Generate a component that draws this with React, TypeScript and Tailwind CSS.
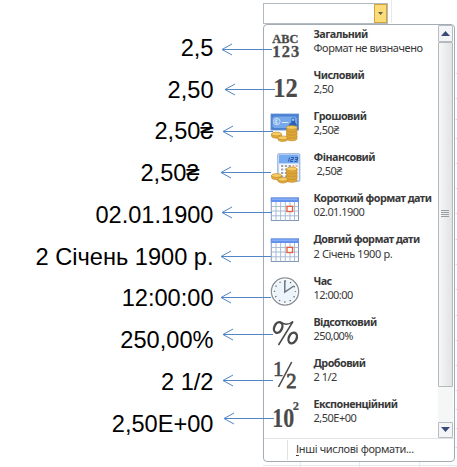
import React from "react";

const INK = "#4a4a4a";
const SERIF = "'Liberation Serif', serif";

function General() {
  return (
    <g fill={INK} stroke={INK} strokeWidth={0.3} fontFamily={SERIF} textAnchor="middle">
      <text x="15.3" y="12.5" fontSize="12.5" fontWeight={700} textLength="26" lengthAdjust="spacingAndGlyphs">ABC</text>
      <text x="15.8" y="27" fontSize="16.5" fontWeight={700} textLength="27" lengthAdjust="spacing">123</text>
    </g>
  );
}

function NumberIcon() {
  return (
    <text x="3.2" y="25.5" fill={INK} stroke={INK} strokeWidth={0.2} fontFamily={SERIF} fontWeight={700} fontSize="28" textLength="24.5" lengthAdjust="spacingAndGlyphs">12</text>
  );
}

function Coins({ y }: { y: number }) {
  return (
    <g transform={`translate(0 ${y})`} stroke="#b9862c" strokeWidth={0.6} fill="#f7cc62">
      {[11, 8, 5, 2].map((v) => (
        <g key={v}>
          <path d={`M16.5 ${v}v2.2c0 2.8 10.5 2.8 10.5 0v-2.2z`} fill="#e3a935" />
          <ellipse cx="21.75" cy={v} rx="5.25" ry="1.9" />
        </g>
      ))}
      <path d="M1.5 8.5v2c0 3 10 3 10 0v-2z" fill="#e3a935" />
      <ellipse cx="6.5" cy="8.5" rx="5" ry="1.9" />
      <path d="M8 12.3v1.5c0 3 9.6 3 9.6 0v-1.5z" fill="#e3a935" />
      <ellipse cx="12.8" cy="12.3" rx="4.8" ry="1.9" />
    </g>
  );
}

function Currency() {
  return (
    <g>
      <rect x="1" y="2" width="27.6" height="16" fill="#4a80d0" stroke="#5f8fd3" strokeWidth={0.8} />
      <path d="M4 4.5h21.5l1.5 1.5v8.5L25.5 16H4l-1.5-1.5V6z" fill="#76a8ea" />
      <circle cx="6.8" cy="9.5" r="3.3" fill="#82afe9" stroke="#c7dcf7" />
      <path d="M7.5 7.8c-2.2-.3-2.2 3.7 0 3.4M12 10.5h6.5" stroke="#d8e7fb" strokeWidth={1.2} fill="none" />
      <path d="M18.5 14c1-3 2.5-2.5 3-4.5-1-5.5 4.5-5.5 3.5 0 .5 2 1.5 1.5 2 4.5z" fill="#2e62b0" />
      <circle cx="23.2" cy="7.8" r="1.3" fill="#9cc2f3" />
      <Coins y={13.5} />
    </g>
  );
}

function Accounting() {
  return (
    <g>
      <rect x="7.8" y="0.8" width="22" height="27.5" rx="1" fill="#dfeafa" stroke="#86a6d2" />
      <rect x="9" y="1.8" width="19.6" height="8.5" fill="#75a9f0" />
      <path d="M18.5 8.5l1-4M21 4.5h2.5l-.5 2h-2l-.5 2h2.5M25 4.5h2.8l-1 4h-2.3M25.2 6.5h2" stroke="#234f9a" fill="none" strokeWidth={0.9} />
      <rect x="9.5" y="11.5" width="18.8" height="15.5" fill="#fff" />
      {[13, 16.5, 20, 23.5].map((v) => (
        <g key={v}>
          <path d={`M11 ${v}h2.3M14.8 ${v}h2.3M18.6 ${v}h2.3`} stroke="#9ba3ad" strokeWidth={2} />
          <path d={`M22.4 ${v}h2M25.6 ${v}h2`} stroke="#e9b08c" strokeWidth={2} />
        </g>
      ))}
      <Coins y={14} />
    </g>
  );
}

function CalendarIcon() {
  return (
    <g>
      <rect x="1.3" y="4" width="27.2" height="22.5" fill="#fbfdff" stroke="#8398b7" />
      <path d="M6 8v18.5M10.6 8v18.5M15.3 8v18.5M20 8v18.5M24.5 8v18.5M1.5 12.5h27M1.5 17h27M1.5 21.8h27" stroke="#a3b5ce" strokeWidth={0.9} />
      <rect x="0.8" y="3.5" width="28.2" height="4.5" fill="#6391ee" />
      <path d="M2 5.2h25.5" stroke="#98b9f8" />
      <rect x="17" y="12.3" width="5.5" height="5.2" fill="#fff" stroke="#ea5b35" strokeWidth={1.3} />
    </g>
  );
}

function ClockIcon() {
  return (
    <g>
      <circle cx="15" cy="14.5" r="13.6" fill="#edf4fb" stroke="#8c9197" strokeWidth={1.4} />
      <circle cx="15" cy="14.5" r="12.3" fill="none" stroke="#fff" strokeWidth={1} />
      <circle cx="15" cy="14.5" r="10.5" fill="none" stroke="#56616e" strokeWidth={1.3} strokeDasharray="1.2 4.298" strokeDashoffset="0.6" />
      <path d="M14.8 3.5V15L23.8 9" fill="none" stroke="#6e7781" strokeWidth={1.5} />
    </g>
  );
}

function PercentIcon() {
  return (
    <g fill="none" stroke={INK}>
      <ellipse cx="8.2" cy="9.5" rx="3.9" ry="5.6" strokeWidth={2.4} transform="rotate(24 8.2 9.5)" />
      <ellipse cx="22.7" cy="20" rx="3.9" ry="5.6" strokeWidth={2.4} transform="rotate(24 22.7 20)" />
      <path d="M11.5 4.7c3.5 2.3 8 1.600 11.500-1.200L8.500 27" strokeWidth={1.5} />
    </g>
  );
}

function FractionIcon() {
  return (
    <g fill={INK} stroke={INK} strokeWidth={0.6} fontFamily={SERIF}>
      <text x="3" y="16.5" fontSize="21">1</text>
      <path d="M21.700 3L8.500 28" strokeWidth={1.6} />
      <text x="16.3" y="29" fontSize="20.5" strokeWidth={0.8}>2</text>
    </g>
  );
}

function ScientificIcon() {
  return (
    <g fill={INK} stroke={INK} strokeWidth={0.2} fontFamily={SERIF} fontWeight={700}>
      <text x="2.3" y="26.5" fontSize="27" textLength="22" lengthAdjust="spacingAndGlyphs">10</text>
      <text x="22.8" y="9.5" fontSize="12.5">2</text>
    </g>
  );
}

type Row = {
  out: string;
  pad: string;
  title: string;
  sample: string;
  sampleCls: string;
  icon: () => React.ReactElement;
  tip: number;
  y: number;
};

const rows: Row[] = [
  { out: "2,5", pad: "pr-0", title: "Загальний", sample: "Формат не визначено", sampleCls: "tracking-[-0.44px]", icon: General, tip: 222, y: 49.5 },
  { out: "2,50", pad: "pr-0", title: "Числовий", sample: "2,50", sampleCls: "tracking-[-0.5px]", icon: NumberIcon, tip: 225, y: 89.5 },
  { out: "2,50₴", pad: "pr-0", title: "Грошовий", sample: "2,50₴", sampleCls: "tracking-[-0.5px]", icon: Currency, tip: 223, y: 131.5 },
  { out: "2,50₴", pad: "pr-[14px]", title: "Фінансовий", sample: "2,50₴", sampleCls: "pl-[3px] tracking-[-0.5px]", icon: Accounting, tip: 221, y: 172.5 },
  { out: "02.01.1900", pad: "pr-0", title: "Короткий формат дати", sample: "02.01.1900", sampleCls: "tracking-[-0.55px]", icon: CalendarIcon, tip: 222, y: 212.5 },
  { out: "2 Січень 1900 р.", pad: "pr-0", title: "Довгий формат дати", sample: "2 Січень 1900 р.", sampleCls: "tracking-[-0.38px]", icon: CalendarIcon, tip: 221, y: 256.5 },
  { out: "12:00:00", pad: "pr-0", title: "Час", sample: "12:00:00", sampleCls: "tracking-[-0.55px]", icon: ClockIcon, tip: 221, y: 297.5 },
  { out: "250,00%", pad: "pr-0", title: "Відсотковий", sample: "250,00%", sampleCls: "tracking-[-0.6px]", icon: PercentIcon, tip: 223, y: 334.5 },
  { out: "2 1/2", pad: "pr-0", title: "Дробовий", sample: "2 1/2", sampleCls: "tracking-[-0.5px]", icon: FractionIcon, tip: 223, y: 380.5 },
  { out: "2,50E+00", pad: "pr-0", title: "Експоненційний", sample: "2,50E+00", sampleCls: "tracking-[-0.5px]", icon: ScientificIcon, tip: 224, y: 418.5 },
];

const gridLines = [73.5, 98.5, 119.5, 138.5, 163.5, 188.5, 213.5, 239.5, 264.5, 289.5, 315.5, 340.5, 365.5, 390.5, 409.5, 428.5, 447.5];

export default function App() {
  return (
    <div className="relative flex h-[467px] w-[457px] overflow-hidden bg-white">
      <div className="flex w-[213.5px] shrink-0 flex-col pt-[27.9px] font-['Liberation_Sans',sans-serif] text-[23.6px] text-black">
        {rows.map((r, i) => (
          <div key={i} className={"h-[41.75px] shrink-0 whitespace-nowrap text-right leading-[41.75px] " + r.pad}>{r.out}</div>
        ))}
      </div>

      <div className="ml-[49.5px] flex w-[192px] shrink-0 flex-col pt-[3px] font-['Noto_Sans',sans-serif] text-[11px] text-[#383838]">
        <div className="flex h-[20.5px] w-[125px] shrink-0 border border-[#b4bac1] bg-white">
          <div className="flex-1" />
          <div className="flex w-[13px] items-center justify-center border border-[#d3a43a] bg-[#fbdc78]">
            <svg width="5" height="3" viewBox="0 0 5 3"><path d="M0 0h5L2.5 3z" fill="#5d5b4c" /></svg>
          </div>
        </div>
        <div className="flex h-[438px] w-[192px] shrink-0 flex-col rounded-sm border border-[#a5acb5] bg-white">
          <div className="flex h-[413px] shrink-0 pr-[1.5px]">
            <div className="flex w-[174px] shrink-0 flex-col pt-[2px]">
              {rows.map((r, i) => {
                const Icon = r.icon;
                return (
                  <div key={i} className="flex h-[41.2px] shrink-0 pl-[6px]">
                    <svg className="mt-[3px] shrink-0 overflow-visible" width="31" height="31" viewBox="0 0 31 31"><Icon /></svg>
                    <div className="pl-[12.5px] leading-[14.2px] whitespace-nowrap">
                      <div className="text-[10.8px] font-bold tracking-[-0.54px]">{r.title}</div>
                      <div className={r.sampleCls}>{r.sample}</div>
                    </div>
                  </div>
                );
              })}
            </div>
            <div className="flex flex-1 flex-col bg-[#f5f6f6]">
              <div className="flex h-[17px] items-center justify-center rounded-[1px] border border-[#b8bcc2] bg-[#f4f5f7]">
                <svg width="9" height="5" viewBox="0 0 9 5"><path d="M0 5h9L4.5 0z" fill="#3a4a78" /></svg>
              </div>
              <div className="flex h-[345px] items-center justify-center rounded-[1px] border border-[#b4b8bd] bg-linear-to-r from-[#f7f7f7] to-[#e1e3e4]">
                <svg width="8" height="8" viewBox="0 0 8 8"><path d="M0 .5h8M0 2.5h8M0 4.5h8M0 6.5h8" stroke="#9a9da1" /></svg>
              </div>
              <div className="flex-1" />
              <div className="flex h-[16px] items-center justify-center rounded-[1px] border border-[#b8bcc2] bg-[#f4f5f7]">
                <svg width="9" height="5" viewBox="0 0 9 5"><path d="M0 0h9L4.5 5z" fill="#3a4a78" /></svg>
              </div>
            </div>
          </div>
          <div className="flex flex-1 items-center border-t border-[#e0e2e5]">
            <div className="ml-[23px] h-[20px] w-px bg-[#e0e2e5]" />
            <div className="pl-[8px] tracking-[-0.34px] whitespace-nowrap"><span className="underline underline-offset-2">І</span>нші числові формати...</div>
          </div>
        </div>
      </div>

      <svg className="pointer-events-none absolute inset-0" width="457" height="467" viewBox="0 0 457 467">
        <g fill="none" stroke="#5085c6" strokeWidth="1">
          {rows.map((r, i) => (
            <path key={i} d={`M${r.tip + 50} ${r.y}H${r.tip}M${r.tip + 10} ${r.y - 5.5}L${r.tip} ${r.y}l10 5.5`} />
          ))}
        </g>
        <path d="M263 465.5h194M300.5 462v5M359.5 462v5M419.5 462v5M391.5 0v23" stroke="#e6eaee" />
        {gridLines.map((y) => (
          <path key={y} d={`M455.5 ${y}h2`} stroke="#d5dae0" />
        ))}
      </svg>
    </div>
  );
}
